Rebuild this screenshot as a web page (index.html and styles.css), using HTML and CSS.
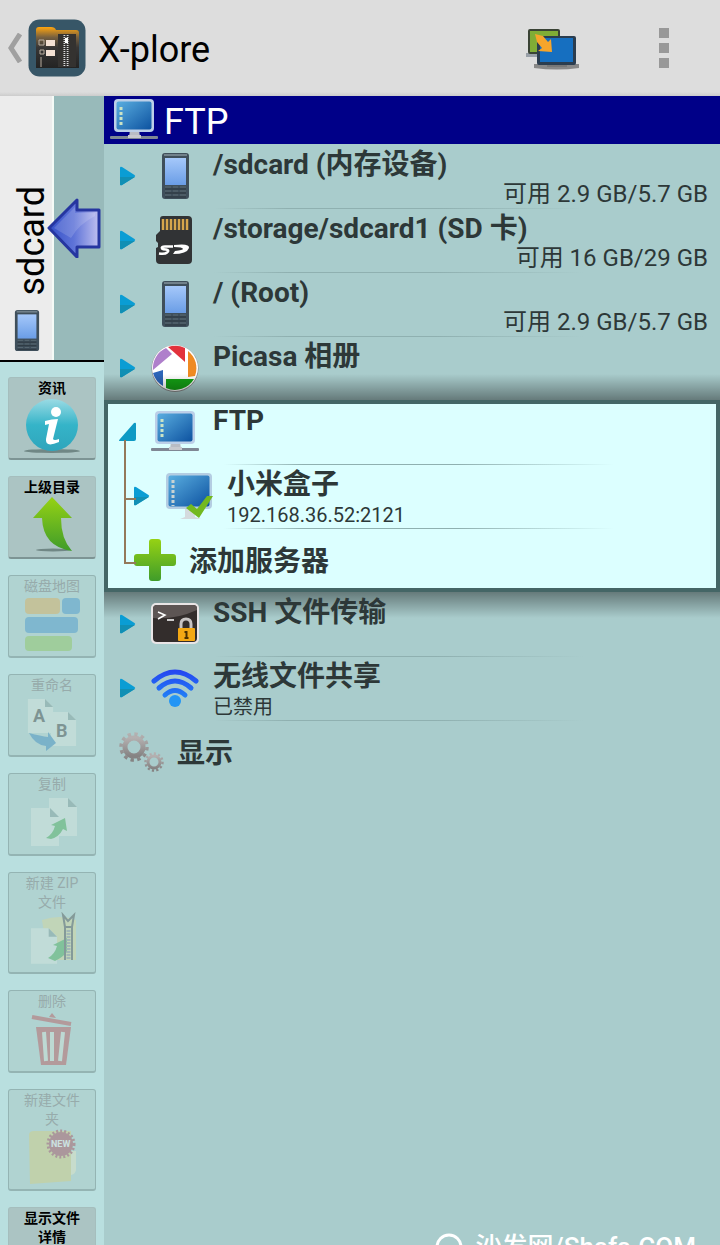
FILE: index.html
```html
<!DOCTYPE html>
<html lang="zh-CN">
<head>
    <meta charset="UTF-8">
    <meta name="viewport" content="width=device-width, initial-scale=1.0">
    <title>X-plore</title>
    <link rel="stylesheet" href="styles.css">
</head>
<body>
    <!-- shared icons -->
    <svg class="sprite" aria-hidden="true">
        <defs>
            <linearGradient id="gScreen" x1="0" y1="0" x2="1" y2="1">
                <stop offset="0" stop-color="#5aaee0"/><stop offset="1" stop-color="#0d52a0"/>
            </linearGradient>
            <linearGradient id="gPhone" x1="0" y1="0" x2="0" y2="1">
                <stop offset="0" stop-color="#a5c8fa"/><stop offset="1" stop-color="#6a9de6"/>
            </linearGradient>
            <linearGradient id="gGreen" x1="0" y1="0" x2="0" y2="1">
                <stop offset="0" stop-color="#96d214"/><stop offset="1" stop-color="#3f9c2a"/>
            </linearGradient>
            <linearGradient id="gWifi" gradientUnits="userSpaceOnUse" x1="0" y1="4" x2="0" y2="44">
                <stop offset="0" stop-color="#2440f0"/><stop offset="1" stop-color="#2196f8"/>
            </linearGradient>
            <linearGradient id="gGear" x1="0" y1="0" x2="0" y2="1">
                <stop offset="0" stop-color="#b4b0b0"/><stop offset="1" stop-color="#858383"/>
            </linearGradient>
            <linearGradient id="gBlue" x1="0" y1="0" x2="1" y2="0">
                <stop offset="0" stop-color="#3450c8"/><stop offset="0.5" stop-color="#5f74d8"/><stop offset="1" stop-color="#c0c0f0"/>
            </linearGradient>
            <linearGradient id="gInfo" x1="0" y1="0" x2="0" y2="1">
                <stop offset="0" stop-color="#9adbe4"/><stop offset="0.5" stop-color="#35b4c8"/><stop offset="1" stop-color="#2fa5bc"/>
            </linearGradient>
            <linearGradient id="gFolder" x1="0" y1="0" x2="0" y2="1">
                <stop offset="0" stop-color="#ffa50f"/><stop offset="0.25" stop-color="#77603f"/><stop offset="0.5" stop-color="#383635"/><stop offset="1" stop-color="#232323"/>
            </linearGradient>
        </defs>
        <symbol id="phone" viewBox="0 0 48 48">
            <rect x="11" y="1" width="27" height="46" rx="3" fill="#3f4f5b"/>
            <rect x="13" y="2" width="23" height="2" fill="#71818b"/>
            <rect x="14" y="6" width="21" height="27" fill="url(#gPhone)"/>
            <path d="M14 37h21M14 41h21M14 45h21" stroke="#2a353c" stroke-width="1"/>
            <path d="M14 35h6M22 35h5M29 35h6M14 39h6M22 39h5M29 39h6M14 43h6M22 43h5M29 43h6" stroke="#5b6a73" stroke-width="1"/>
        </symbol>
        <symbol id="monitor" viewBox="0 0 48 48">
            <path d="M20 34h9l1 7h-11z" fill="#b9bcc4"/>
            <rect x="0" y="40" width="48" height="3" rx="1" fill="#7f8794"/>
            <rect x="18" y="39" width="13" height="3" fill="#c8c9ce"/>
            <rect x="4" y="3" width="40" height="33" rx="4" fill="#bccfe8"/>
            <rect x="6.500" y="5.500" width="35" height="28" rx="2" fill="url(#gScreen)"/>
            <path d="M11 11v20" stroke="#cbe3c5" stroke-width="3" stroke-dasharray="3 2"/>
        </symbol>
        <symbol id="expand" viewBox="0 0 18 20">
            <path d="M1 2Q1 0 3 1L15.500 9Q17 10 15.500 11L3 19Q1 20 1 18z" fill="#0a9dd4"/>
            <path d="M1 11h15L3 19Q1 20 1 18z" fill="#118fb4"/>
        </symbol>
        <symbol id="page" viewBox="0 0 30 40">
            <path d="M1 1h19l9 9v29H1z" fill="#e2eee6"/>
            <path d="M20 1l9 9h-9z" fill="#6d8c8a"/>
        </symbol>
    </svg>

    <header class="topbar">
        <a class="home" href="#" aria-label="返回">
            <svg class="back" viewBox="0 0 14 30"><path d="M12 1L3 15l9 14" fill="none" stroke="#a0a0a0" stroke-width="5"/></svg>
            <svg class="logo" viewBox="0 0 58 58">
                <rect x="0.500" y="0.500" width="57" height="57" rx="11" fill="#375667"/>
                <path d="M8 11q0-3 3-3h12q4 0 5 3h20q3 0 3 3v35H8z" fill="url(#gFolder)"/>
                <path d="M30 15h18v33H30z" fill="#343230"/>
                <path d="M18 21h9v6h-9zM18 31h9v6h-9z" fill="#f3e0d3"/>
                <path d="M11 21h5v5h-5zM12 31h4v4h-4zM13 38v10" fill="none" stroke="#b9ad9f" stroke-width="1"/>
                <path d="M38 16v32" stroke="#ddd" stroke-width="5" stroke-dasharray="1 1"/>
                <path d="M38 16v32" stroke="#333" stroke-width="1.500"/>
                <path d="M37 19h3v5h-3z" fill="#fff"/>
            </svg>
            <h1>X-plore</h1>
        </a>
        <div class="actions">
            <button class="action" aria-label="切换面板">
                <svg width="58" height="46" viewBox="0 0 58 46">
                    <path d="M1 28h16v4H1z" fill="#99a0a8"/>
                    <rect x="3" y="4" width="32" height="25" rx="2" fill="#3a4335"/>
                    <rect x="5" y="6" width="28" height="21" fill="#80ad36"/>
                    <path d="M9 39h45v4q-22 3-45 0z" fill="#888"/>
                    <path d="M22 41h20" stroke="#666"/>
                    <rect x="12" y="11" width="39" height="29" rx="2" fill="#2b3d4f"/>
                    <rect x="15" y="13" width="33" height="24" fill="#166fc0"/>
                    <path d="M10 9l8 2 5 6 3-3 1 13-14-1 4-3-5-6z" fill="#f6a52b"/>
                </svg>
            </button>
            <button class="action" aria-label="更多">
                <svg width="10" height="40" viewBox="0 0 10 40"><path d="M0 0h10v10H0zM0 15h10v10H0zM0 30h10v10H0z" fill="#989898"/></svg>
            </button>
        </div>
    </header>

    <div class="content">
        <aside class="sidebar">
            <button class="pane-tab">
                <span class="pane-name">
                    <span class="pane-text">sdcard</span>
                    <svg class="pane-phone" viewBox="10 0 29 48"><use href="#phone" width="48" height="48"/></svg>
                </span>
                <svg class="pane-arrow" viewBox="0 0 54 60">
                    <path d="M2 30L30 2v10h22v37H30v10z" fill="url(#gBlue)" stroke="#2636a0" stroke-width="3" stroke-linejoin="round"/>
                    <path d="M7 30L28 9v6h20v3Q32 26 24 40z" fill="#fff" opacity="0.15"/>
                </svg>
            </button>
            <div class="tools">
                <button class="tool">
                    <span>资讯</span>
                    <svg viewBox="0 0 56 56">
                        <ellipse cx="28" cy="53" rx="28" ry="2" fill="#708785"/>
                        <circle cx="28" cy="27" r="26" fill="url(#gInfo)"/>
                        <circle cx="32" cy="14" r="5" fill="#fff"/>
                        <path d="M21 23q7-2 13-2l-5 20q1 2 6 0v3q-14 6-13-3l3-15-4 1z" fill="#fff"/>
                    </svg>
                </button>
                <button class="tool">
                    <span>上级目录</span>
                    <svg viewBox="0 0 56 56">
                        <ellipse cx="29" cy="53" rx="17" ry="1.500" fill="#708785"/>
                        <path d="M28 0l20 21H37q0 21 11 33Q19 50 18 21H9z" fill="url(#gGreen)"/>
                    </svg>
                </button>
                <button class="tool" disabled>
                    <span>磁盘地图</span>
                    <svg viewBox="0 0 56 56">
                        <rect x="1" y="2" width="35" height="16" rx="4" fill="#e8a33a"/>
                        <rect x="38" y="2" width="18" height="16" rx="4" fill="#2585cc"/>
                        <rect x="1" y="21" width="53" height="16" rx="4" fill="#2585cc"/>
                        <rect x="1" y="40" width="47" height="15" rx="4" fill="#82c33d"/>
                    </svg>
                </button>
                <button class="tool" disabled>
                    <span>重命名</span>
                    <svg viewBox="0 0 56 56">
                        <use href="#page" x="3" y="2" width="27" height="38"/>
                        <use href="#page" x="26" y="15" width="27" height="38"/>
                        <path d="M5 38q12 3 19 4v-5l8 11-10 8v-5Q11 50 5 38z" fill="#1976bb"/>
                        <text x="9" y="27" class="letter">A</text>
                        <text x="32" y="42" class="letter">B</text>
                    </svg>
                </button>
                <button class="tool" disabled>
                    <span>复制</span>
                    <svg viewBox="0 0 56 56">
                        <use href="#page" x="24" y="2" width="30" height="42"/>
                        <use href="#page" x="6" y="12" width="30" height="42"/>
                        <path d="M22 44q7-4 9-12l-4-1 14-7 2 13-4-2q-4 8-12 10z" fill="#2ba33a"/>
                    </svg>
                </button>
                <button class="tool" disabled>
                    <span>新建 ZIP 文件</span>
                    <svg viewBox="0 0 56 56">
                        <path d="M18 8q18-6 34 0v40H24z" fill="#e3d98c"/>
                        <use href="#page" x="6" y="14" width="28" height="40"/>
                        <path d="M24 46q7-4 9-12l-4-1 14-7v14q-4 5-12 9z" fill="#2ba33a"/>
                        <path d="M41 15v33M48 15v33M41 15l-2-12 5 6 6-6-2 12z" fill="none" stroke="#333" stroke-width="2"/>
                        <path d="M44.500 18v30" stroke="#888" stroke-width="4" stroke-dasharray="2 1"/>
                    </svg>
                </button>
                <button class="tool" disabled>
                    <span>删除</span>
                    <svg viewBox="0 0 56 56">
                        <path d="M12 16h35l-5 38H17z" fill="#b9313a"/>
                        <path d="M8 6l39 7" stroke="#b9313a" stroke-width="4"/>
                        <path d="M25 6l3-4 4 5" fill="#b9313a"/>
                        <path d="M20 21l2 29M28 21v29M39 21l-3 29" stroke="#d6e6d8" stroke-width="4"/>
                    </svg>
                </button>
                <button class="tool" disabled>
                    <span>新建文件夹</span>
                    <svg viewBox="0 0 56 56">
                        <path d="M5 6q0-4 5-4h37v50l-41 3z" fill="#dfd06a"/>
                        <path d="M47 22h5v18q0 5-5 6z" fill="#f3efc5"/>
                        <circle cx="37" cy="15" r="12" fill="#a32b3c"/>
                        <circle cx="37" cy="15" r="13" fill="none" stroke="#a32b3c" stroke-width="3" stroke-dasharray="2 2"/>
                        <text x="27" y="18" class="badge">NEW</text>
                    </svg>
                </button>
                <button class="tool">
                    <span>显示文件详情</span>
                </button>
            </div>
        </aside>

        <main class="pane">
            <h2 class="pane-title">
                <svg><use href="#monitor"/></svg>
                <span>FTP</span>
            </h2>
            <ul class="tree">
                <li class="row">
                    <button class="toggle" aria-label="展开"><svg><use href="#expand"/></svg></button>
                    <svg class="icon"><use href="#phone"/></svg>
                    <div class="text">
                        <strong>/sdcard (内存设备)</strong>
                        <span class="space">可用 2.9 GB/5.7 GB</span>
                    </div>
                </li>
                <li class="row">
                    <button class="toggle" aria-label="展开"><svg><use href="#expand"/></svg></button>
                    <svg class="icon" viewBox="0 0 48 48">
                        <path d="M12 0h25q4 0 4 4v40q0 4-4 4H9q-4 0-4-4V32l2-1v-4l-2-2v-6l4-4V3q0-3 3-3z" fill="#313335"/>
                        <path d="M12 3v11M16 3v11M20 3v11M24 3v11M28 3v11M32 3v11M36 3v11" stroke="#d5a54c" stroke-width="2.500"/>
                        <path d="M22 30.500H14q-4 0-3 2 1 1 4 1 4 1 1 3-2 2-8 1" fill="none" stroke="#fff" stroke-width="2.500"/>
                        <path d="M23 29q16-2 15 3-2 6-16 6l2-3q8-1 8-2 0-2-9-2z" fill="#fff"/>
                    </svg>
                    <div class="text">
                        <strong>/storage/sdcard1 (SD 卡)</strong>
                        <span class="space">可用 16 GB/29 GB</span>
                    </div>
                </li>
                <li class="row">
                    <button class="toggle" aria-label="展开"><svg><use href="#expand"/></svg></button>
                    <svg class="icon"><use href="#phone"/></svg>
                    <div class="text">
                        <strong>/ (Root)</strong>
                        <span class="space">可用 2.9 GB/5.7 GB</span>
                    </div>
                </li>
                <li class="row">
                    <button class="toggle" aria-label="展开"><svg><use href="#expand"/></svg></button>
                    <svg class="icon" viewBox="0 0 48 48">
                        <circle cx="24" cy="24.500" r="23.500" fill="#888"/>
                        <circle cx="24" cy="24" r="23" fill="#fff"/>
                        <path d="M2 26A22 22 0 0 1 15 4l6 6z" fill="#af7fcb"/>
                        <path d="M17 3a22 22 0 0 1 17 1v14z" fill="#e2323c"/>
                        <path d="M37 7a22 22 0 0 1 7 25l-7 1z" fill="#ef8a22"/>
                        <path d="M43 35a22 22 0 0 1-28 9V35z" fill="#14a014"/>
                        <path d="M2 29l10-3v16A22 22 0 0 1 2 29z" fill="#2c65b8"/>
                    </svg>
                    <div class="text"><strong>Picasa 相册</strong></div>
                </li>
                <li class="opened">
                    <div class="row">
                        <button class="toggle" aria-label="收起"><svg viewBox="0 0 18 20"><path d="M17 2v15q0 2-2 2H1q-2 0 0-2L15 1q2-1 2 1z" fill="#0d9ac4"/></svg></button>
                        <svg class="icon"><use href="#monitor"/></svg>
                        <div class="text"><strong>FTP</strong></div>
                    </div>
                    <ul>
                        <li class="row child">
                            <button class="toggle" aria-label="展开"><svg><use href="#expand"/></svg></button>
                            <svg class="icon" viewBox="0 0 48 48">
                                <path d="M20 36h9l1 9 6 2H15l5-2z" fill="#d4dadd"/>
                                <rect x="1" y="1" width="46" height="36" rx="4" fill="#b4cde2"/>
                                <rect x="3.500" y="3.500" width="41" height="31" rx="2" fill="url(#gScreen)"/>
                                <path d="M8 8v26" stroke="#c9d3d3" stroke-width="3" stroke-dasharray="3 2"/>
                                <path d="M21 36l5-4 6 5L42 24h6L34 46z" fill="#73b91f"/>
                            </svg>
                            <div class="text">
                                <strong>小米盒子</strong>
                                <span class="note">192.168.36.52:2121</span>
                            </div>
                        </li>
                        <li class="row child command">
                            <svg class="plus" viewBox="0 0 44 44"><path d="M16 4q0-3 3-3h6q3 0 3 3v12h12q3 0 3 3v6q0 3-3 3H28v12q0 3-3 3h-6q-3 0-3-3V28H4q-3 0-3-3v-6q0-3 3-3h12z" fill="url(#gGreen)"/></svg>
                            <strong>添加服务器</strong>
                        </li>
                    </ul>
                </li>
                <li class="row">
                    <button class="toggle" aria-label="展开"><svg><use href="#expand"/></svg></button>
                    <svg class="icon" viewBox="0 0 48 48">
                        <rect x="0" y="3" width="48" height="41" rx="5" fill="#e9e5e6"/>
                        <rect x="2" y="5" width="44" height="37" rx="4" fill="#332d2c"/>
                        <path d="M2 18Q24 20 46 10V8q0-3-4-3H6Q2 5 2 9z" fill="#5d5554"/>
                        <path d="M7 12l7 3-7 4M16 20h7" fill="none" stroke="#fff" stroke-width="1.500"/>
                        <path d="M30 30v-6q0-5 5-5t5 5v6" fill="none" stroke="#c8c4c4" stroke-width="3"/>
                        <rect x="27" y="28" width="17" height="13" rx="1" fill="#f4a814"/>
                        <path d="M35.500 31v7M33.500 32h3M33.500 38h4" stroke="#4c3000" stroke-width="2"/>
                    </svg>
                    <div class="text"><strong>SSH 文件传输</strong></div>
                </li>
                <li class="row">
                    <button class="toggle" aria-label="展开"><svg><use href="#expand"/></svg></button>
                    <svg class="icon" viewBox="0 0 48 48">
                        <g fill="none" stroke="url(#gWifi)" stroke-width="5" stroke-linecap="round">
                            <path d="M3 17Q24-1 45 17"/>
                            <path d="M8 24Q24 10 40 24"/>
                            <path d="M14 31Q24 22 34 31"/>
                        </g>
                        <circle cx="24" cy="37" r="6" fill="#2395f5"/>
                    </svg>
                    <div class="text">
                        <strong>无线文件共享</strong>
                        <span class="note">已禁用</span>
                    </div>
                </li>
                <li class="row command">
                    <svg class="gears" viewBox="0 0 46 44">
                        <g fill="none" stroke="url(#gGear)">
                            <circle cx="15" cy="17" r="9" stroke-width="5"/>
                            <circle cx="15" cy="17" r="13" stroke-width="3.500" stroke-dasharray="3.400 3.400"/>
                            <circle cx="35" cy="32" r="6" stroke-width="3"/>
                            <circle cx="35" cy="32" r="8.500" stroke-width="2.500" stroke-dasharray="2.200 2.200"/>
                        </g>
                    </svg>
                    <strong>显示</strong>
                </li>
            </ul>
        </main>
    </div>

    <div class="watermark">
        <svg viewBox="0 0 30 30"><circle cx="15" cy="15" r="12" fill="none" stroke="#fff" stroke-width="3"/></svg>
        沙发网/Shafa.COM
    </div>
</body>
</html>
```
FILE: styles.css
```css
:root {
    --pane-color: #a9cccc;
    --side-color: #b9dfdf;
    --title-color: #000088;
    --text-color: #2d3838;
    --frame-color: #446666;
}
* {
    box-sizing: border-box;
}
body {
    font-family: Roboto, "Noto Sans CJK SC", sans-serif;
    color: var(--text-color);
    background-color: var(--pane-color);
    display: flex;
    flex-direction: column;
    height: 100vh;
    margin: 0;
    overflow: hidden;
    position: relative;
}
button {
    font: inherit;
    color: inherit;
    background: none;
    border: none;
    padding: 0;
    cursor: pointer;
}
svg {
    display: block;
    flex-shrink: 0;
}
ul {
    list-style: none;
    margin: 0;
    padding: 0;
}
.sprite {
    position: absolute;
    width: 0;
    height: 0;
}

/* top bar */
.topbar {
    display: flex;
    justify-content: space-between;
    align-items: center;
    flex-shrink: 0;
    height: 96px;
    background: linear-gradient(#dddddd 92px, #cccccc);
}
.home {
    display: flex;
    align-items: center;
    padding-left: 8px;
    color: #000;
    text-decoration: none;
}
.back {
    width: 14px;
    height: 30px;
    margin-right: 6px;
}
.logo {
    width: 58px;
    height: 58px;
    margin-right: 12px;
}
h1 {
    font-size: 36px;
    font-weight: 400;
    line-height: 48px;
    margin: 0;
    padding-top: 4px;
}
.actions {
    display: flex;
    align-items: center;
    gap: 76px;
    padding-right: 51px;
}

/* left column */
.content {
    display: flex;
    flex: 1;
    min-height: 0;
}
.sidebar {
    width: 104px;
    flex-shrink: 0;
    background-color: var(--side-color);
    overflow: hidden;
}
.pane-tab {
    display: flex;
    position: relative;
    width: 100%;
    height: 266px;
    background-color: #98baba;
    border-bottom: 2px solid #000;
}
.pane-name {
    display: flex;
    flex-direction: column;
    align-items: center;
    justify-content: flex-end;
    gap: 14px;
    width: 54px;
    height: 100%;
    padding: 0 0 8px 2px;
    background-color: #ececec;
    border-right: 2px solid #f4faf6;
}
.pane-text {
    writing-mode: vertical-rl;
    transform: rotate(180deg);
    margin-left: 10px;
    font-size: 36px;
    line-height: 40px;
    color: #000;
}
.pane-phone {
    width: 26px;
    height: 43px;
}
.pane-arrow {
    position: absolute;
    left: 47px;
    top: 102px;
    width: 54px;
    height: 60px;
}
.tools {
    display: flex;
    flex-direction: column;
    gap: 16px;
    padding: 15px 8px;
}
.tool {
    display: flex;
    flex-direction: column;
    align-items: center;
    padding: 1px 0 4px;
    font-size: 14px;
    font-weight: 700;
    line-height: 19px;
    color: #000;
    background-color: #abc4c3;
    border: 1px solid #a5bebd;
    border-bottom: 2px solid #7d9494;
    border-radius: 3px;
}
.tool span {
    width: 60px;
}
.tool svg {
    width: 56px;
    height: 56px;
}
.tool:disabled {
    background-color: #b0d3d1;
    border-color: #94b4b3;
    cursor: default;
}
.tool:disabled span {
    color: #97abab;
    font-weight: 400;
}
.tool:disabled svg {
    opacity: 0.35;
}
.letter {
    font-size: 18px;
    font-weight: 700;
    fill: #222;
}
.badge {
    font-size: 9px;
    font-weight: 700;
    fill: #fff;
}

/* folder tree */
.pane {
    flex: 1;
    min-width: 0;
}
.pane-title {
    display: flex;
    align-items: center;
    gap: 6px;
    height: 48px;
    margin: 0;
    padding-left: 6px;
    font-size: 36px;
    font-weight: 400;
    color: #fff;
    background-color: var(--title-color);
}
.pane-title span {
    padding-top: 4px;
}
.pane-title svg {
    width: 48px;
    height: 48px;
}
.row {
    display: flex;
    align-items: center;
    position: relative;
    height: 64px;
    padding: 0 12px 0 15px;
}
.row + .row,
.row.child {
    background: linear-gradient(90deg, transparent, #8fb0b0 20%, #8fb0b0 60%, transparent) no-repeat 110px 0 / 370px 1px;
}
.row.child {
    padding-left: 29px;
    background-position-x: 120px;
    background-size: 390px 1px;
}
.toggle svg {
    width: 18px;
    height: 20px;
}
.icon {
    width: 48px;
    height: 48px;
    margin: 0 14px;
}
.text {
    display: flex;
    flex-direction: column;
    align-self: flex-start;
    flex: 1;
    min-width: 0;
}
strong {
    font-size: 28px;
    font-weight: 700;
    line-height: 42px;
}
.space {
    align-self: flex-end;
    font-size: 24px;
    line-height: 16px;
}
.note {
    font-size: 20px;
    line-height: 18px;
}
.command {
    gap: 12px;
}
.command strong {
    padding-top: 4px;
}
.plus {
    width: 44px;
    height: 44px;
}
.gears {
    width: 46px;
    height: 44px;
}
.opened {
    position: relative;
    background-color: #dcffff;
    box-shadow: inset 0 0 0 4px var(--frame-color);
}
.opened::before,
.opened::after {
    content: "";
    position: absolute;
    left: 0;
    right: 0;
    height: 26px;
    pointer-events: none;
}
.opened::before {
    bottom: 100%;
    background: linear-gradient(transparent, rgba(0, 0, 0, 0.4));
}
.opened::after {
    top: 100%;
    background: linear-gradient(rgba(0, 0, 0, 0.4), transparent);
}
.child::before {
    content: "";
    position: absolute;
    left: 20px;
    top: -32px;
    width: 10px;
    height: 66px;
    border-left: 2px solid #94795a;
    border-bottom: 2px solid #94795a;
}
.child:first-child::before {
    top: -24px;
    height: 58px;
}

.watermark {
    display: flex;
    align-items: center;
    gap: 12px;
    position: absolute;
    right: 24px;
    bottom: -20px;
    font-size: 26px;
    font-weight: 500;
    line-height: 36px;
    color: #fff;
}
.watermark svg {
    width: 30px;
    height: 30px;
}
```
